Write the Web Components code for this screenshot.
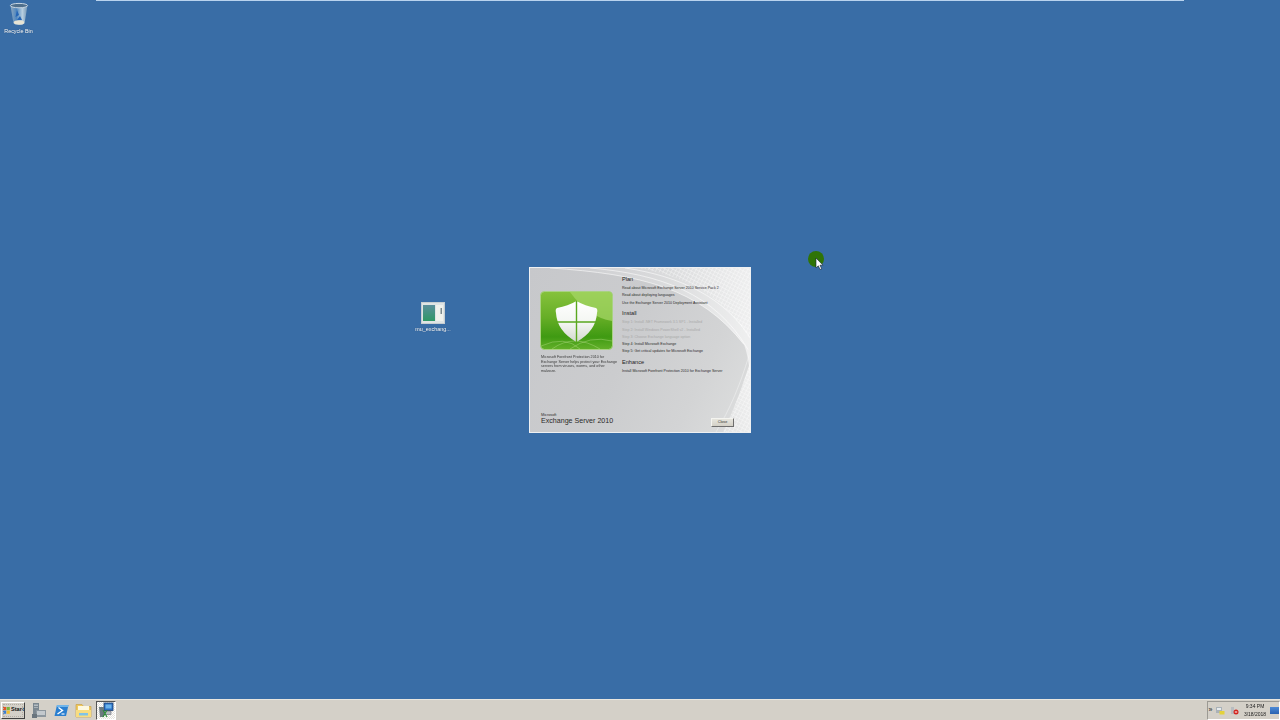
<!DOCTYPE html>
<html><head><meta charset="utf-8"><title>Desktop</title>
<style>
html,body{margin:0;height:100%;overflow:hidden;background:#396da6}
</style></head><body>
<x-desktop>
  <x-topline slot="top"></x-topline>
  <x-icon style="left:0;top:1px;width:37px" label="Recycle Bin" kind="bin"></x-icon>
  <x-icon style="left:413px;top:301px;width:40px" label="mu_exchang..." kind="setup"></x-icon>
  <x-installer style="left:529px;top:266px"></x-installer>
  <x-pointer style="left:808px;top:250px"></x-pointer>
  <x-taskbar slot="bar"></x-taskbar>
</x-desktop>
<script>
function def(name, html){
  customElements.define(name, class extends HTMLElement{
    connectedCallback(){
      if(this.shadowRoot) return;
      const r=this.attachShadow({mode:'open'});
      r.innerHTML=typeof html==='function'?html(this):html;
    }
  });
}
def('x-desktop',`<style>
:host{display:flex;flex-direction:column;width:1280px;height:720px;background:#396da6;font-family:"Liberation Sans",Arial,sans-serif;overflow:hidden}
.top{display:block;flex:none}
.canvas{flex:1;position:relative}
.bar{display:block;flex:none}
</style>
<slot name="top" class="top"></slot>
<div class="canvas"><slot></slot></div>
<slot name="bar" class="bar"></slot>`);

def('x-topline',`<style>:host{display:block;height:1px;margin:0 96px;background:#b9d3ee}</style>`);

const binSvg=`<svg width="24" height="25" viewBox="0 0 24 25" style="filter:blur(.3px)">
<defs><linearGradient id="b" x1="0" x2="1"><stop offset="0" stop-color="#8fa9c0"/><stop offset=".35" stop-color="#4f86be"/><stop offset=".7" stop-color="#b8cfe0"/><stop offset="1" stop-color="#6f92b2"/></linearGradient></defs>
<path d="M3.500 3.500 L6.500 21.500 Q12 24.500 17.500 21.500 L20.500 3.500Z" fill="url(#b)"/>
<ellipse cx="12" cy="3.600" rx="8.600" ry="2.200" fill="#4f6f8c" stroke="#c8d6e2" stroke-width="1"/>
<path d="M10 8 L8.500 15 L12 13 Z M13 14 L10 18 L15 18 Z" fill="#2565b5"/>
<ellipse cx="12" cy="20.500" rx="5.200" ry="2.200" fill="#e7e4d4"/>
</svg>`;
const setupSvg=`<svg width="24" height="22" viewBox="0 0 24 22" style="filter:blur(.4px)">
<defs><linearGradient id="g" x1="0" y1="0" x2="0" y2="1"><stop offset="0" stop-color="#5a8f9c"/><stop offset="1" stop-color="#2f9866"/></linearGradient></defs>
<rect x=".5" y=".5" width="23" height="21" fill="#dfe4e4" stroke="#c6ced2"/>
<rect x="2" y="3" width="12" height="16" fill="url(#g)"/>
<rect x="15" y="3" width="7" height="16" fill="#eff1ec"/>
<rect x="19.500" y="6" width="1.500" height="6" fill="#7b898e"/>
</svg>`;
def('x-icon',h=>`<style>
:host{position:absolute;display:flex;flex-direction:column;align-items:center;color:#fff;font:5.4px/7px "Liberation Sans",Arial,sans-serif}
.l{margin-top:${h.getAttribute('kind')==='bin'?'1px':'2px'};white-space:nowrap;text-shadow:0 0 1px #1d3f66;filter:blur(.25px)}
svg{display:block}
</style>${h.getAttribute('kind')==='bin'?binSvg:setupSvg}<div class="l">${h.getAttribute('label')}</div>`);

def('x-shield',`<style>:host{display:block;width:73px;height:59px}svg{display:block;filter:blur(.3px)}</style>
<svg width="73" height="59" viewBox="0 0 73 59">
<defs>
<linearGradient id="c" x1="0" y1="0" x2="0" y2="1"><stop offset="0" stop-color="#86c23c"/><stop offset=".45" stop-color="#66ae26"/><stop offset=".78" stop-color="#3f9a12"/><stop offset="1" stop-color="#63b02a"/></linearGradient>
<linearGradient id="s" x1="0" y1="0" x2="0" y2="1"><stop offset="0" stop-color="#fff"/><stop offset=".55" stop-color="#f3f5f1"/><stop offset="1" stop-color="#d2d8cf"/></linearGradient>
</defs>
<rect x=".5" y=".5" width="72" height="58" rx="4" fill="url(#c)" stroke="#a9d283"/>
<path d="M30 1 H68 Q72 1 72 5 V30 Q48 26 30 1Z" fill="#a6d768" opacity=".7"/>
<path d="M1 55 Q25 44 40 58 M12 58 Q34 42 60 58 M30 58 Q50 44 72 50" fill="none" stroke="#c7e59a" stroke-width=".6" opacity=".6"/>
<path d="M36.500 10 Q45 15 56 17 Q58 18 57 22 Q56 40 36.500 51 Q17 40 16 22 Q15 18 17 17 Q28 15 36.500 10Z" fill="url(#s)"/>
<path d="M36.500 10 V51 M16 31 H57" stroke="#5aa81f" stroke-width="1.400"/>
</svg>`);

def('x-installer',`<style>
:host{position:absolute;display:block;width:222px;height:166px;box-sizing:border-box;border:1px solid #eef0f2;color:#262626;font-family:"Liberation Sans",Arial,sans-serif;overflow:hidden;background:linear-gradient(115deg,#c7c8cb 0%,#cbccce 45%,#d3d4d5 75%,#dedfdf 100%)}
.swoosh{position:absolute;inset:0;width:100%;height:100%}
.grid{position:relative;display:grid;grid-template-columns:81px 1fr;height:100%;box-sizing:border-box;padding:8px 0 0 10px}
.left{display:flex;flex-direction:column;padding-top:15px}
.blurb{margin:5px 0 0 1px;font-size:3.7px;line-height:4.700px;white-space:nowrap;color:#3a3a3a;filter:blur(.15px)}
.brand{margin-top:auto;margin-bottom:7px;margin-left:1px;color:#2b2b2b}
.ms{font-size:3.8px;line-height:4px}
.es{font-size:7.1px;line-height:8px;white-space:nowrap}
.right{padding-left:1px;display:flex;flex-direction:column;position:relative}
.h{font-size:5.6px;line-height:7px;color:#222;white-space:nowrap;margin-bottom:2.200px}
.i{font-size:3.600px;line-height:7.300px;white-space:nowrap;color:#2a2a2a}
.d{color:#a9a9a9}
.sec{margin-top:3px}
.btn{position:absolute;right:16px;bottom:5px;width:23px;height:9px;box-sizing:border-box;background:linear-gradient(#e6e5de,#d3d0c6);border:1px solid;border-color:#f4f4f0 #6e6e6e #6e6e6e #f4f4f0;font-size:3.800px;line-height:7px;text-align:center;color:#333}
</style>
<svg class="swoosh" viewBox="0 0 220 165" preserveAspectRatio="none">
<defs>
<pattern id="m" width="3.500" height="3.500" patternUnits="userSpaceOnUse" patternTransform="rotate(28)"><path d="M0 0 H3.500 M0 0 V3.500" stroke="#fff" stroke-width=".9" fill="none"/></pattern>
<linearGradient id="f" x1="0" y1="0" x2="1" y2="0"><stop offset="0" stop-color="#fff" stop-opacity=".04"/><stop offset=".6" stop-color="#fff" stop-opacity=".3"/><stop offset="1" stop-color="#fff" stop-opacity=".6"/></linearGradient>
<linearGradient id="f2" x1="0" y1="1" x2="1" y2="0"><stop offset="0" stop-color="#fff" stop-opacity=".2"/><stop offset="1" stop-color="#fff" stop-opacity=".6"/></linearGradient>
</defs>
<path d="M20 0 C110 6 170 20 214 77 Q219 90 220 110 V0Z" fill="url(#f)"/>
<path d="M110 0 C160 10 195 30 220 72 V0Z" fill="url(#m)" opacity=".7"/>
<path d="M20 0 C110 6 170 20 214 77 M60 0 C130 6 185 25 218 82 M95 0 C150 8 195 30 220 70" fill="none" stroke="#fff" stroke-width=".7" opacity=".8"/>
<path d="M193 165 C205 140 212 120 220 95 V165Z" fill="url(#f2)"/>
<path d="M193 165 C205 140 212 120 220 95 V165Z" fill="url(#m)" opacity=".7"/>
<path d="M186 165 C200 142 210 118 219 88" fill="none" stroke="#fff" stroke-width=".6" opacity=".6"/>
</svg>
<div class="grid">
  <div class="left">
    <x-shield></x-shield>
    <div class="blurb">Microsoft Forefront Protection 2010 for<br>Exchange Server helps protect your Exchange<br>servers from viruses, worms, and other<br>malware.</div>
    <div class="brand"><div class="ms">Microsoft</div><div class="es">Exchange Server 2010</div></div>
  </div>
  <div class="right">
    <div class="h">Plan</div>
    <div class="i">Read about Microsoft Exchange Server 2010 Service Pack 2</div>
    <div class="i">Read about deploying languages</div>
    <div class="i">Use the Exchange Server 2010 Deployment Assistant</div>
    <div class="h sec">Install</div>
    <div class="i d">Step 1: Install .NET Framework 3.5 SP1 - Installed</div>
    <div class="i d">Step 2: Install Windows PowerShell v2 - Installed</div>
    <div class="i d">Step 3: Choose Exchange language option</div>
    <div class="i">Step 4: Install Microsoft Exchange</div>
    <div class="i">Step 5: Get critical updates for Microsoft Exchange</div>
    <div class="h sec">Enhance</div>
    <div class="i">Install Microsoft Forefront Protection 2010 for Exchange Server</div>
    <div class="btn">Close</div>
  </div>
</div>`);

def('x-pointer',`<style>:host{position:absolute;display:block;width:16px;height:20px}
.dot{width:16px;height:16px;border-radius:50%;background:#2f7406}
svg{position:absolute;left:7px;top:6px}</style>
<div class="dot"></div>
<svg width="9" height="14" viewBox="0 0 9 14"><path d="M1 1 V11 L3.300 8.800 L5 12.500 L6.700 11.800 L5 8.200 H8Z" fill="#fff" stroke="#123" stroke-width=".6"/></svg>`);

def('x-taskbar',`<style>
:host{display:flex;align-items:center;height:21px;box-sizing:border-box;background:#d4d0c8;border-top:1px solid #e9e6df;padding:0 0 0 1px;font-family:"Liberation Sans",Arial,sans-serif}
.start{width:24px;height:17px;box-sizing:border-box;border:1px solid;border-color:#fff #404040 #404040 #fff;display:flex;align-items:center;gap:1px;padding-left:1px;font:bold 5.6px/1 "Liberation Sans",Arial,sans-serif;color:#111;outline:1px dotted #b0aca4;outline-offset:-3px}
.q{display:flex;align-items:center;margin-left:5px;gap:4px}
.b{width:18px;height:18px;display:flex;align-items:center;justify-content:center;filter:blur(.25px)}
.active{width:20px;height:19px;box-sizing:border-box;border:1px solid;border-color:#555 #fff #fff #555;background:repeating-conic-gradient(#fff 0 25%,#e4e2dc 0 50%) 0 0/2px 2px;display:flex;align-items:center;justify-content:center}
.sp{flex:1}
</style>
<div class="start"><svg width="7" height="7" viewBox="0 0 7 7"><rect width="3.200" height="3.200" fill="#e2552b"/><rect x="3.600" width="3.200" height="3.200" fill="#7cb53a"/><rect y="3.600" width="3.200" height="3.200" fill="#3f7fd0"/><rect x="3.600" y="3.600" width="3.200" height="3.200" fill="#f2bf2d"/></svg>Start</div>
<div class="q">
<div class="b"><svg width="16" height="17" viewBox="0 0 16 17"><rect x="2" y="1" width="6" height="11" fill="#7b8790"/><rect x="3" y="2.500" width="4" height="1.500" fill="#b6bec4"/><rect x="3" y="5" width="4" height="1" fill="#aab2b8"/><rect x="5" y="8" width="10" height="7" fill="#8d979e"/><rect x="6" y="9" width="8" height="4" fill="#c3c9cd"/><rect x="1" y="12" width="5" height="4" fill="#6a757d"/></svg></div>
<div class="b"><svg width="15" height="13" viewBox="0 0 15 13"><path d="M3 1 H14.500 L12 12 H.5Z" fill="#2a7fd0"/><path d="M3 1 H14.500 L14 3 H2.500Z" fill="#6fb4ea"/><path d="M4.500 3.500 L8.500 6.500 L3.500 10" fill="none" stroke="#fff" stroke-width="1.400"/><path d="M7.500 10 H10.500" stroke="#fff" stroke-width="1.100"/></svg></div>
<div class="b"><svg width="17" height="16" viewBox="0 0 17 16"><path d="M1 2.500 H7 L8.500 4.500 H16 V15 H1Z" fill="#f0c95c" stroke="#c9a24a" stroke-width=".7"/><rect x="3" y="4" width="11" height="4" fill="#fdf8e0"/><path d="M1 8 H16 V15 H1Z" fill="#f7dc80"/><rect x="4" y="11" width="9" height="2.500" fill="#7fc3e8"/></svg></div>
<div class="active"><svg width="16" height="16" viewBox="0 0 16 16"><rect x="6" y="1" width="9" height="7.500" fill="#2b6fc4" stroke="#1d3f6e" stroke-width=".8"/><rect x="7.500" y="2.500" width="6" height="4" fill="#6ab3ec"/><path d="M1 5 H6 V15 H2 Z" fill="#6c7a80"/><rect x="6" y="9" width="7" height="3.500" fill="#b8bfc2" stroke="#556" stroke-width=".5"/><path d="M5 8 L9 15 M9 8 L5 15" stroke="#2f8c3a" stroke-width="1.200"/></svg></div>
</div>
<div class="sp"></div>
<x-tray></x-tray>`);

def('x-tray',`<style>
:host{display:flex;align-items:center;width:73px;height:19px;box-sizing:border-box;border:1px solid;border-color:#9c9a94 #fff #fff #9c9a94;font:5px/8.500px "Liberation Sans",Arial,sans-serif;color:#222}
.a{margin-left:0;font-size:7px;width:5px;text-align:center}
.n{display:flex;align-items:center;gap:5px;margin-left:3px}
.c{margin-left:3px;width:26px;text-align:center;white-space:nowrap;filter:blur(.15px)}
.sd{margin-left:auto;width:9px;height:7px;background:linear-gradient(#4d8ad6,#2a62b0)}
</style>
<span class="a">»</span>
<div class="n">
<svg width="9" height="9" viewBox="0 0 9 9"><rect x="0" y="1" width="6" height="6" fill="#aab2b8"/><rect x="1" y="2" width="4" height="2" fill="#e6eaec"/><rect x="3.500" y="5" width="5" height="3.500" fill="#e4d23a"/></svg>
<svg width="9" height="9" viewBox="0 0 9 9"><rect x="1" y="1" width="3" height="7" fill="#b8bcc0"/><circle cx="6" cy="6" r="2.500" fill="#d2231c"/><rect x="4.800" y="5.500" width="2.400" height="1" fill="#fff"/></svg>
</div>
<div class="c"><div>9:34 PM</div><div>3/18/2018</div></div>
<div class="sd"></div>`);
</script>
</body></html>
